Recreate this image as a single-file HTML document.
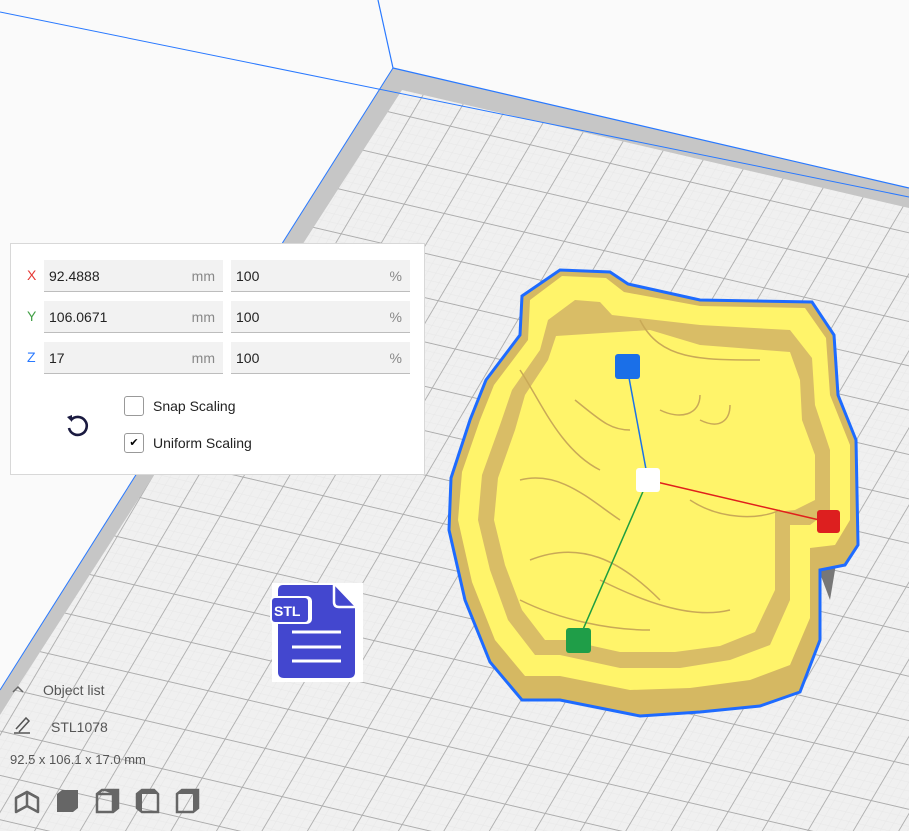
<!DOCTYPE html>
<html><head><meta charset="utf-8"><style>
html,body{margin:0;padding:0}
body{width:909px;height:831px;overflow:hidden;position:relative;background:#fafafa;font-family:"Liberation Sans",sans-serif}
svg.bg{position:absolute;left:0;top:0}
.panel{position:absolute;left:10px;top:243px;width:415px;height:232px;background:#fff;border:1px solid #d8d8d8;box-sizing:border-box}
.row{position:absolute;left:0;height:32px}
.lab{position:absolute;left:16px;top:7px;font-size:14px}
.f{position:absolute;top:0;height:31px;background:#f2f2f2;border-bottom:1px solid #bdbdbd;font-size:14px;color:#222}
.f span{position:absolute;top:8px}
.u{color:#888}
.cb{position:absolute;left:113px;width:20px;height:20px;border:1px solid #999;border-radius:3px;box-sizing:border-box;background:#fff}
.cbl{position:absolute;left:142px;font-size:14px;color:#222}
.t{position:absolute;font-size:14px;color:#555}
</style></head><body>
<svg class="bg" width="909" height="831" viewBox="0 0 909 831">
<defs>
<pattern id="g" width="10" height="10" patternUnits="userSpaceOnUse" patternTransform="matrix(4 0.93 -2.3 3.9 393 68)">
<rect width="10" height="10" fill="#f0f0f0"/>
<path d="M2 0V10M4 0V10M6 0V10M8 0V10M0 2H10M0 4H10M0 6H10M0 8H10" stroke="#e4e4e4" stroke-width="0.1"/>
<path d="M0 0V10M0 0H10" stroke="#acacac" stroke-width="0.45"/>
</pattern>
</defs>
<polygon points="393,68 909,188 909,831 0,831 0,690" fill="url(#g)"/>
<polygon points="393,68 909,188 909,208 402,90 22,680 0,715 0,690" fill="#c6c6c6"/>
<line x1="393" y1="68" x2="909" y2="188" stroke="#2979ff" stroke-width="1.2"/>
<line x1="393" y1="68" x2="0" y2="690" stroke="#2979ff" stroke-width="1"/>
<line x1="378" y1="0" x2="393" y2="68" stroke="#2979ff" stroke-width="1.2"/>
<line x1="0" y1="12" x2="909" y2="197" stroke="#2979ff" stroke-width="1"/>
<polygon points="820,520 840,540 830,600 815,560" fill="#777"/>
<path d="M522,296 L560,270 L610,272 L628,284 L700,300 L812,302 L834,335 L838,395 L856,440 L858,545 L845,565 L820,570 L820,640 L800,692 L760,706 L700,712 L640,716 L560,700 L522,700 L490,662 L465,600 L449,530 L451,478 L470,420 L486,380 L520,335 Z" fill="#d5b862" stroke="#1e6bff" stroke-width="3"/>
<path d="M530,300 L562,276 L606,278 L624,292 L700,306 L805,308 L826,338 L830,395 L850,445 L850,520 L835,545 L810,548 L810,618 L790,665 L750,680 L690,688 L630,690 L560,676 L525,676 L495,640 L472,582 L458,520 L462,472 L480,420 L494,385 L528,340 Z" fill="#fff46a"/>
<path d="M548,320 L575,300 L600,302 L612,315 L700,325 L790,330 L812,358 L815,405 L830,450 L830,510 L810,525 L790,525 L790,600 L770,645 L730,660 L680,668 L620,668 L560,655 L535,655 L508,620 L490,570 L478,520 L482,475 L500,425 L512,390 L540,350 Z" fill="#d9bd66"/>
<path d="M556,336 L650,330 L700,345 L790,352 L800,380 L802,420 L815,455 L815,500 L795,510 L775,512 L775,590 L755,632 L720,646 L675,652 L620,652 L566,640 L545,640 L522,610 L505,565 L494,520 L498,478 L515,430 L525,395 L548,360 Z" fill="#fff46a"/>
<g fill="none" stroke="#c9a957" stroke-width="1.5">
<path d="M520,370 C540,400 560,450 600,470"/><path d="M575,400 C600,420 610,430 630,430"/>
<path d="M660,410 C680,420 700,415 700,395"/><path d="M700,420 C720,430 730,420 730,405"/>
<path d="M520,480 C560,470 590,500 620,520"/><path d="M530,560 C580,540 620,560 660,600"/>
<path d="M690,500 C720,520 760,520 780,510"/><path d="M600,580 C640,600 690,620 730,610"/>
<path d="M640,320 C660,360 700,360 760,360"/><path d="M520,600 C560,620 610,630 650,630"/>
</g>
<line x1="627" y1="367" x2="648" y2="480" stroke="#1a73e8" stroke-width="1.5"/>
<line x1="648" y1="480" x2="828" y2="522" stroke="#e0201c" stroke-width="1.5"/>
<line x1="648" y1="480" x2="578" y2="641" stroke="#1e9e40" stroke-width="1.5"/>
<rect x="615" y="354" width="25" height="25" rx="3" fill="#1a6fe8"/>
<rect x="636" y="468" width="24" height="24" rx="3" fill="#fff"/>
<rect x="817" y="510" width="23" height="23" rx="3" fill="#dd1f1f"/>
<rect x="566" y="628" width="25" height="25" rx="3" fill="#1f9e48"/>
<rect x="272" y="583" width="91" height="99" fill="#fff"/>
<path d="M283,585 H334 L355,607 V672 Q355,678 349,678 H284 Q278,678 278,672 V591 Q278,585 283,585 Z" fill="#4347cf"/>
<path d="M334,585 V602 Q334,607 339,607 H355" fill="none" stroke="#fff" stroke-width="2.5"/>
<rect x="270" y="596" width="42" height="28" rx="5" fill="#fff"/>
<rect x="272" y="598" width="36" height="24" rx="3" fill="#4347cf"/>
<text x="274" y="616" font-family="Liberation Sans" font-weight="bold" font-size="14" fill="#fff">STL</text>
<path d="M292,632H341M292,647H341M292,661H341" stroke="#fff" stroke-width="3"/>
<path d="M13,692 L18,687 L23,692" fill="none" stroke="#666" stroke-width="1.5"/>
<path d="M14,733 H30 M16,729 L26,718 L29,721 L19,732" fill="none" stroke="#555" stroke-width="1.5"/>
<g fill="none" stroke="#666" stroke-width="2.5" stroke-linejoin="round">
<path d="M27,792 L38,798 V812 L27,806 Z M27,792 L16,798 V812 L27,806"/>
<path d="M16,798 L27,792 L38,798"/>
</g>
<path d="M57,794 L62,790 H78 V808 L73,812 H57 Z" fill="#666"/>
<path d="M97,794 L102,790 H118 V808 L113,812 H97 Z M97,794 H113 V812 M113,794 L118,790" fill="none" stroke="#666" stroke-width="2.5"/>
<path d="M102,790 H118 V808 L113,812 V794 Z" fill="#666"/>
<path d="M137,794 L142,790 H154 L158,794 V812 H142 L137,808 Z" fill="none" stroke="#666" stroke-width="2.5"/>
<path d="M137,794 L142,790 H154 L158,794 H142 V812 L137,808 Z" fill="#666"/>
<path d="M177,794 L182,790 H198 V808 L193,812 H177 Z" fill="none" stroke="#666" stroke-width="2.5"/>
<path d="M177,794 L182,790 H198 L193,794 Z M193,794 L198,790 V808 L193,812 Z" fill="#666"/>
</svg>
<div class="panel">
 <div class="row" style="top:16px"><span class="lab" style="color:#e53935">X</span>
  <div class="f" style="left:33px;width:179px"><span style="left:5px">92.4888</span><span class="u" style="right:8px">mm</span></div>
  <div class="f" style="left:220px;width:179px"><span style="left:5px">100</span><span class="u" style="right:8px">%</span></div></div>
 <div class="row" style="top:57px"><span class="lab" style="color:#43a047">Y</span>
  <div class="f" style="left:33px;width:179px"><span style="left:5px">106.0671</span><span class="u" style="right:8px">mm</span></div>
  <div class="f" style="left:220px;width:179px"><span style="left:5px">100</span><span class="u" style="right:8px">%</span></div></div>
 <div class="row" style="top:98px"><span class="lab" style="color:#2979ff">Z</span>
  <div class="f" style="left:33px;width:179px"><span style="left:5px">17</span><span class="u" style="right:8px">mm</span></div>
  <div class="f" style="left:220px;width:179px"><span style="left:5px">100</span><span class="u" style="right:8px">%</span></div></div>
 <div class="cb" style="top:152px"></div><span class="cbl" style="top:154px">Snap Scaling</span>
 <div class="cb" style="top:189px;font-size:11px;text-align:center;line-height:18px">&#10004;</div><span class="cbl" style="top:191px">Uniform Scaling</span>
 <svg style="position:absolute;left:52px;top:168px" width="28" height="28" viewBox="0 0 28 28"><path d="M8,8 A9,9 0 1 1 6,16" fill="none" stroke="#1a1a40" stroke-width="2.6"/><path d="M4,5 L9,3 L9,10 Z" fill="#1a1a40"/></svg>
</div>
<span class="t" style="left:43px;top:682px">Object list</span>
<span class="t" style="left:51px;top:719px">STL1078</span>
<span class="t" style="left:10px;top:752px;font-size:13px">92.5 x 106.1 x 17.0 mm</span>
</body></html>
